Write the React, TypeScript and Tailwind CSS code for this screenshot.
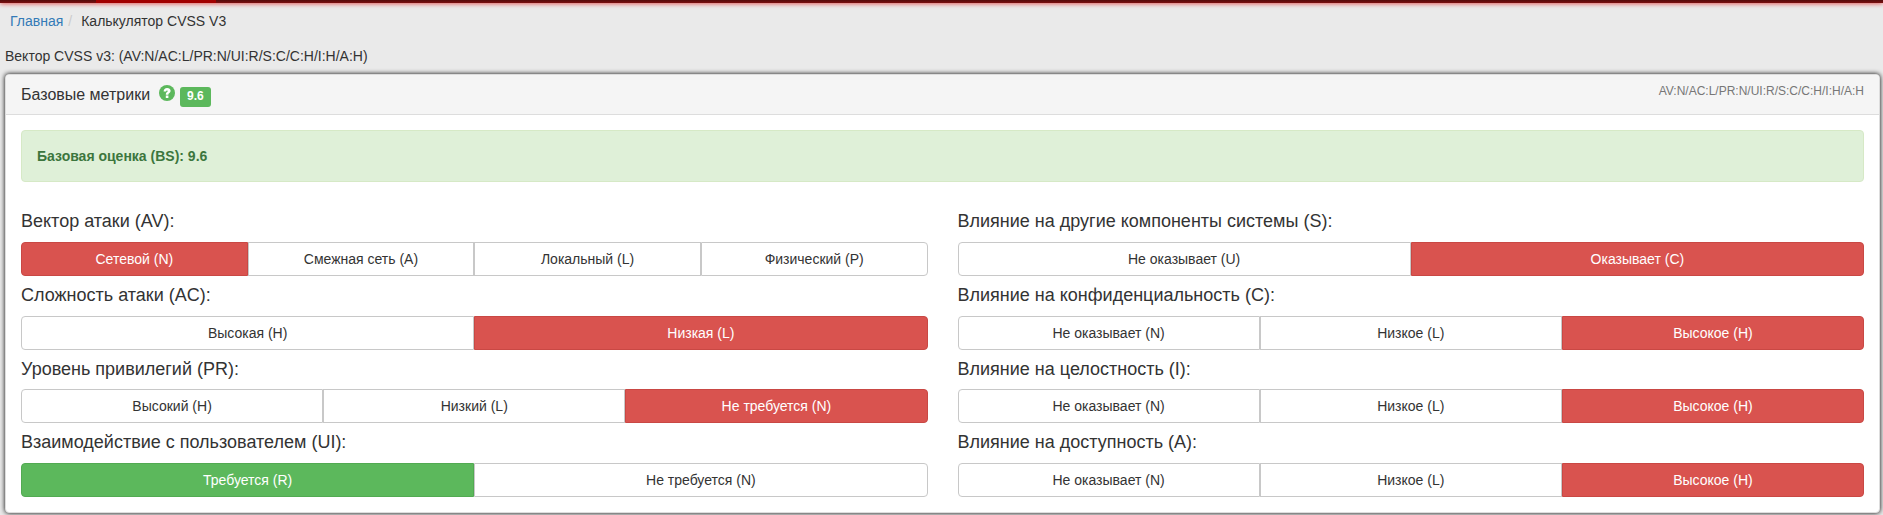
const metrics = {
  left: [
    { title: "Вектор атаки (AV):", options: ["Сетевой (N)", "Смежная сеть (A)", "Локальный (L)", "Физический (P)"], active: 0, tone: "danger" },
    { title: "Сложность атаки (AC):", options: ["Высокая (H)", "Низкая (L)"], active: 1, tone: "danger" },
    { title: "Уровень привилегий (PR):", options: ["Высокий (H)", "Низкий (L)", "Не требуется (N)"], active: 2, tone: "danger" },
    { title: "Взаимодействие с пользователем (UI):", options: ["Требуется (R)", "Не требуется (N)"], active: 0, tone: "success" },
  ],
  right: [
    { title: "Влияние на другие компоненты системы (S):", options: ["Не оказывает (U)", "Оказывает (C)"], active: 1, tone: "danger" },
    { title: "Влияние на конфиденциальность (C):", options: ["Не оказывает (N)", "Низкое (L)", "Высокое (H)"], active: 2, tone: "danger" },
    { title: "Влияние на целостность (I):", options: ["Не оказывает (N)", "Низкое (L)", "Высокое (H)"], active: 2, tone: "danger" },
    { title: "Влияние на доступность (A):", options: ["Не оказывает (N)", "Низкое (L)", "Высокое (H)"], active: 2, tone: "danger" },
  ],
};

type Metric = (typeof metrics.left)[number];

const tones: Record<string, string> = {
  danger: "border-[#c94844] bg-[#d9534f] text-white",
  success: "border-[#52aa52] bg-[#5cb85c] text-white",
  plain: "border-[#c8c8c8] bg-white text-[#333]",
};

function MetricRow({ metric }: { metric: Metric }) {
  return (
    <div className="pb-[10px]">
      <h4 className="mb-[10px] text-[18px] leading-[19.6px]">{metric.title}</h4>
      <div className="flex">
        {metric.options.map((option, i) => (
          <button
            key={option}
            className={`h-[34px] min-w-0 flex-1 border text-[14px] leading-5 first:rounded-l-[4px] last:rounded-r-[4px] ${tones[i === metric.active ? metric.tone : "plain"]}`}
          >
            {option}
          </button>
        ))}
      </div>
    </div>
  );
}

function Column({ items }: { items: Metric[] }) {
  return (
    <div className="flex-1">
      {items.map((metric) => (
        <MetricRow key={metric.title} metric={metric} />
      ))}
    </div>
  );
}

function HelpIcon() {
  return (
    <svg className="ml-[9px] mt-[-4px] size-4" viewBox="0 0 16 16">
      <circle cx="8" cy="8" r="8" fill="#5cb85c" />
      <path d="M4.6 6.4C4.7 4.100 6 2.900 8.100 2.900c2.100 0 3.500 1.200 3.500 2.900 0 1.300-.7 2-1.400 2.500-.6.4-.8.7-.8 1.500H6.800c0-1.500.5-2.200 1.200-2.700.6-.4.8-.6.8-1s-.3-.7-.8-.7c-.6 0-.9.4-.9 1z" fill="#fff" />
      <path d="M6.800 10.500h2.600v2.500H6.800z" fill="#fff" />
    </svg>
  );
}

export default function App() {
  return (
    <div className="h-[515px] overflow-hidden bg-[#eaeaea] font-['Liberation_Sans',Arial,sans-serif] text-[14px] leading-5 text-[#333]">
      <div className="flex h-[3px] bg-linear-to-b from-[#560c0c] to-[#7c1010] shadow-[0_0_5px_#e00000]">
        <div className="ml-24 w-[120px] bg-[#a20000]" />
      </div>
      <nav className="flex h-9 items-center pl-[10px] pb-[1px]">
        <a className="text-[#337ab7]">Главная</a>
        <span className="px-[5px] text-[#ccc]">/</span>
        <span className="ml-1">Калькулятор CVSS V3</span>
      </nav>
      <p className="mt-[7px] pl-[5px]">Вектор CVSS v3: (AV:N/AC:L/PR:N/UI:R/S:C/C:H/I:H/A:H)</p>
      <section className="ml-[5px] mt-[8px] h-[439px] w-[1875px] rounded-[4px] border border-[#ddd] bg-white shadow-[0_0_5px_#000]">
        <header className="flex h-10 items-start justify-between rounded-t-[3px] border-b border-[#ddd] bg-[#f5f5f5] px-[15px] pt-[10px]">
          <div className="flex h-5 items-center">
            <h3 className="text-[16px] leading-5">Базовые метрики</h3>
            <HelpIcon />
            <span className="ml-[5px] mt-[4px] h-5 rounded-[3px] bg-[#5cb85c] px-[7px] text-[12px] leading-[18px] font-bold text-white">9.6</span>
          </div>
          <span className="text-[12px] leading-[13px] text-[#777]">AV:N/AC:L/PR:N/UI:R/S:C/C:H/I:H/A:H</span>
        </header>
        <div className="p-[15px]">
          <div className="h-[52px] rounded-[4px] border border-[#d6e9c6] bg-[#dff0d8] p-[15px] font-bold text-[#3c763d]">
            Базовая оценка (BS): 9.6
          </div>
          <div className="mt-[30.4px] flex gap-[30px]">
            <Column items={metrics.left} />
            <Column items={metrics.right} />
          </div>
        </div>
      </section>
    </div>
  );
}
